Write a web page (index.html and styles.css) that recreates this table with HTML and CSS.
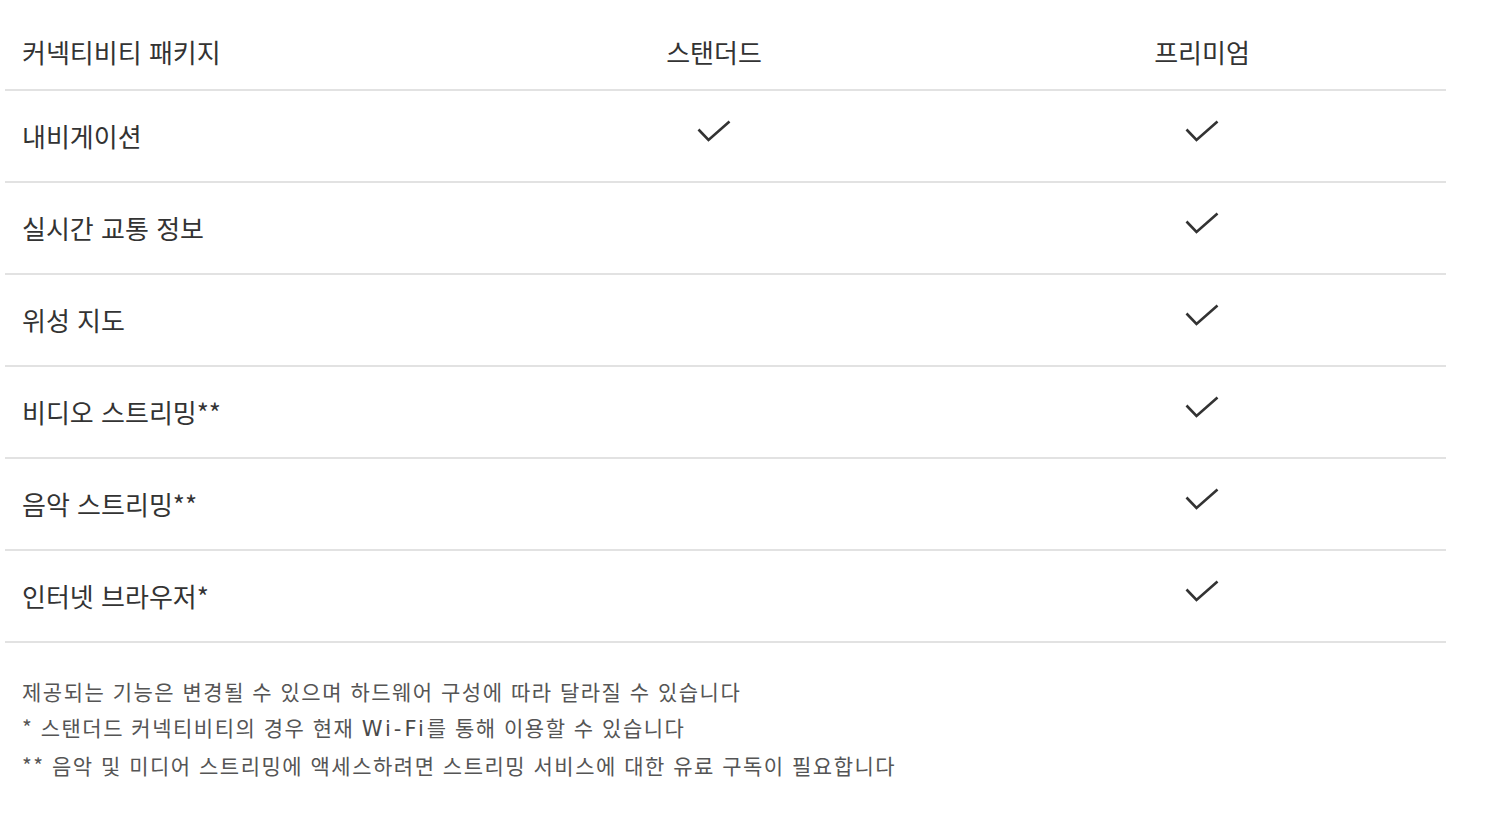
FILE: index.html
```html
<!DOCTYPE html>
<html lang="ko">
<head>
<meta charset="utf-8">
<title>커넥티비티 패키지</title>
<link rel="stylesheet" href="styles.css">
</head>
<body>
<div class="page">
  <div class="table">
    <div class="row head">
      <div class="cell label">커넥티비티 패키지</div>
      <div class="cell center">스탠더드</div>
      <div class="cell center">프리미엄</div>
    </div>
    <div class="row">
      <div class="cell label">내비게이션</div>
      <div class="cell center"><svg class="check" viewBox="0 0 34 22"><path d="M1.5 9.5 L11.5 20 L32.5 1.5"/></svg></div>
      <div class="cell center"><svg class="check" viewBox="0 0 34 22"><path d="M1.5 9.5 L11.5 20 L32.5 1.5"/></svg></div>
    </div>
    <div class="row">
      <div class="cell label">실시간 교통 정보</div>
      <div class="cell center"></div>
      <div class="cell center"><svg class="check" viewBox="0 0 34 22"><path d="M1.5 9.5 L11.5 20 L32.5 1.5"/></svg></div>
    </div>
    <div class="row">
      <div class="cell label">위성 지도</div>
      <div class="cell center"></div>
      <div class="cell center"><svg class="check" viewBox="0 0 34 22"><path d="M1.5 9.5 L11.5 20 L32.5 1.5"/></svg></div>
    </div>
    <div class="row">
      <div class="cell label">비디오 스트리밍**</div>
      <div class="cell center"></div>
      <div class="cell center"><svg class="check" viewBox="0 0 34 22"><path d="M1.5 9.5 L11.5 20 L32.5 1.5"/></svg></div>
    </div>
    <div class="row">
      <div class="cell label">음악 스트리밍**</div>
      <div class="cell center"></div>
      <div class="cell center"><svg class="check" viewBox="0 0 34 22"><path d="M1.5 9.5 L11.5 20 L32.5 1.5"/></svg></div>
    </div>
    <div class="row">
      <div class="cell label">인터넷 브라우저*</div>
      <div class="cell center"></div>
      <div class="cell center"><svg class="check" viewBox="0 0 34 22"><path d="M1.5 9.5 L11.5 20 L32.5 1.5"/></svg></div>
    </div>
  </div>
  <div class="notes">
    <p>제공되는 기능은 변경될 수 있으며 하드웨어 구성에 따라 달라질 수 있습니다</p>
    <p>* 스탠더드 커넥티비티의 경우 현재 <span class="latin">Wi-Fi</span>를 통해 이용할 수 있습니다</p>
    <p>** 음악 및 미디어 스트리밍에 액세스하려면 스트리밍 서비스에 대한 유료 구독이 필요합니다</p>
  </div>
</div>
</body>
</html>
```

FILE: styles.css
```css
html, body {
  margin: 0;
  padding: 0;
  background: #ffffff;
}

body {
  font-family: "Noto Sans CJK KR", "Noto Sans", sans-serif;
  color: #333333;
}

.page {
  padding-left: 5px;
  width: 1441px;
}

.table {
  display: flex;
  flex-direction: column;
}

.row {
  display: grid;
  grid-template-columns: 465px 488px 488px;
  height: 92px;
  border-bottom: 2px solid #e2e2e2;
  box-sizing: border-box;
  align-items: center;
}

.row.head {
  height: 91px;
  padding-top: 14px;
}

.cell {
  font-size: 26px;
  line-height: 32px;
  color: #333333;
}

.label {
  padding-left: 17px;
}

.center {
  display: flex;
  justify-content: center;
  align-items: center;
}

.check {
  width: 34px;
  height: 22px;
  margin-top: -10px;
  fill: none;
  stroke: #333333;
  stroke-width: 2.6;
  stroke-linecap: butt;
  stroke-linejoin: miter;
}

.notes {
  padding-left: 17px;
  padding-top: 30px;
}

.notes p {
  margin: 0;
  font-size: 21px;
  line-height: 36px;
  color: #555555;
  letter-spacing: 1.5px;
}

.latin {
  font-family: "DejaVu Sans", sans-serif;
  font-size: 21px;
  letter-spacing: 3px;
  color: #4a4a4a;
}
```
